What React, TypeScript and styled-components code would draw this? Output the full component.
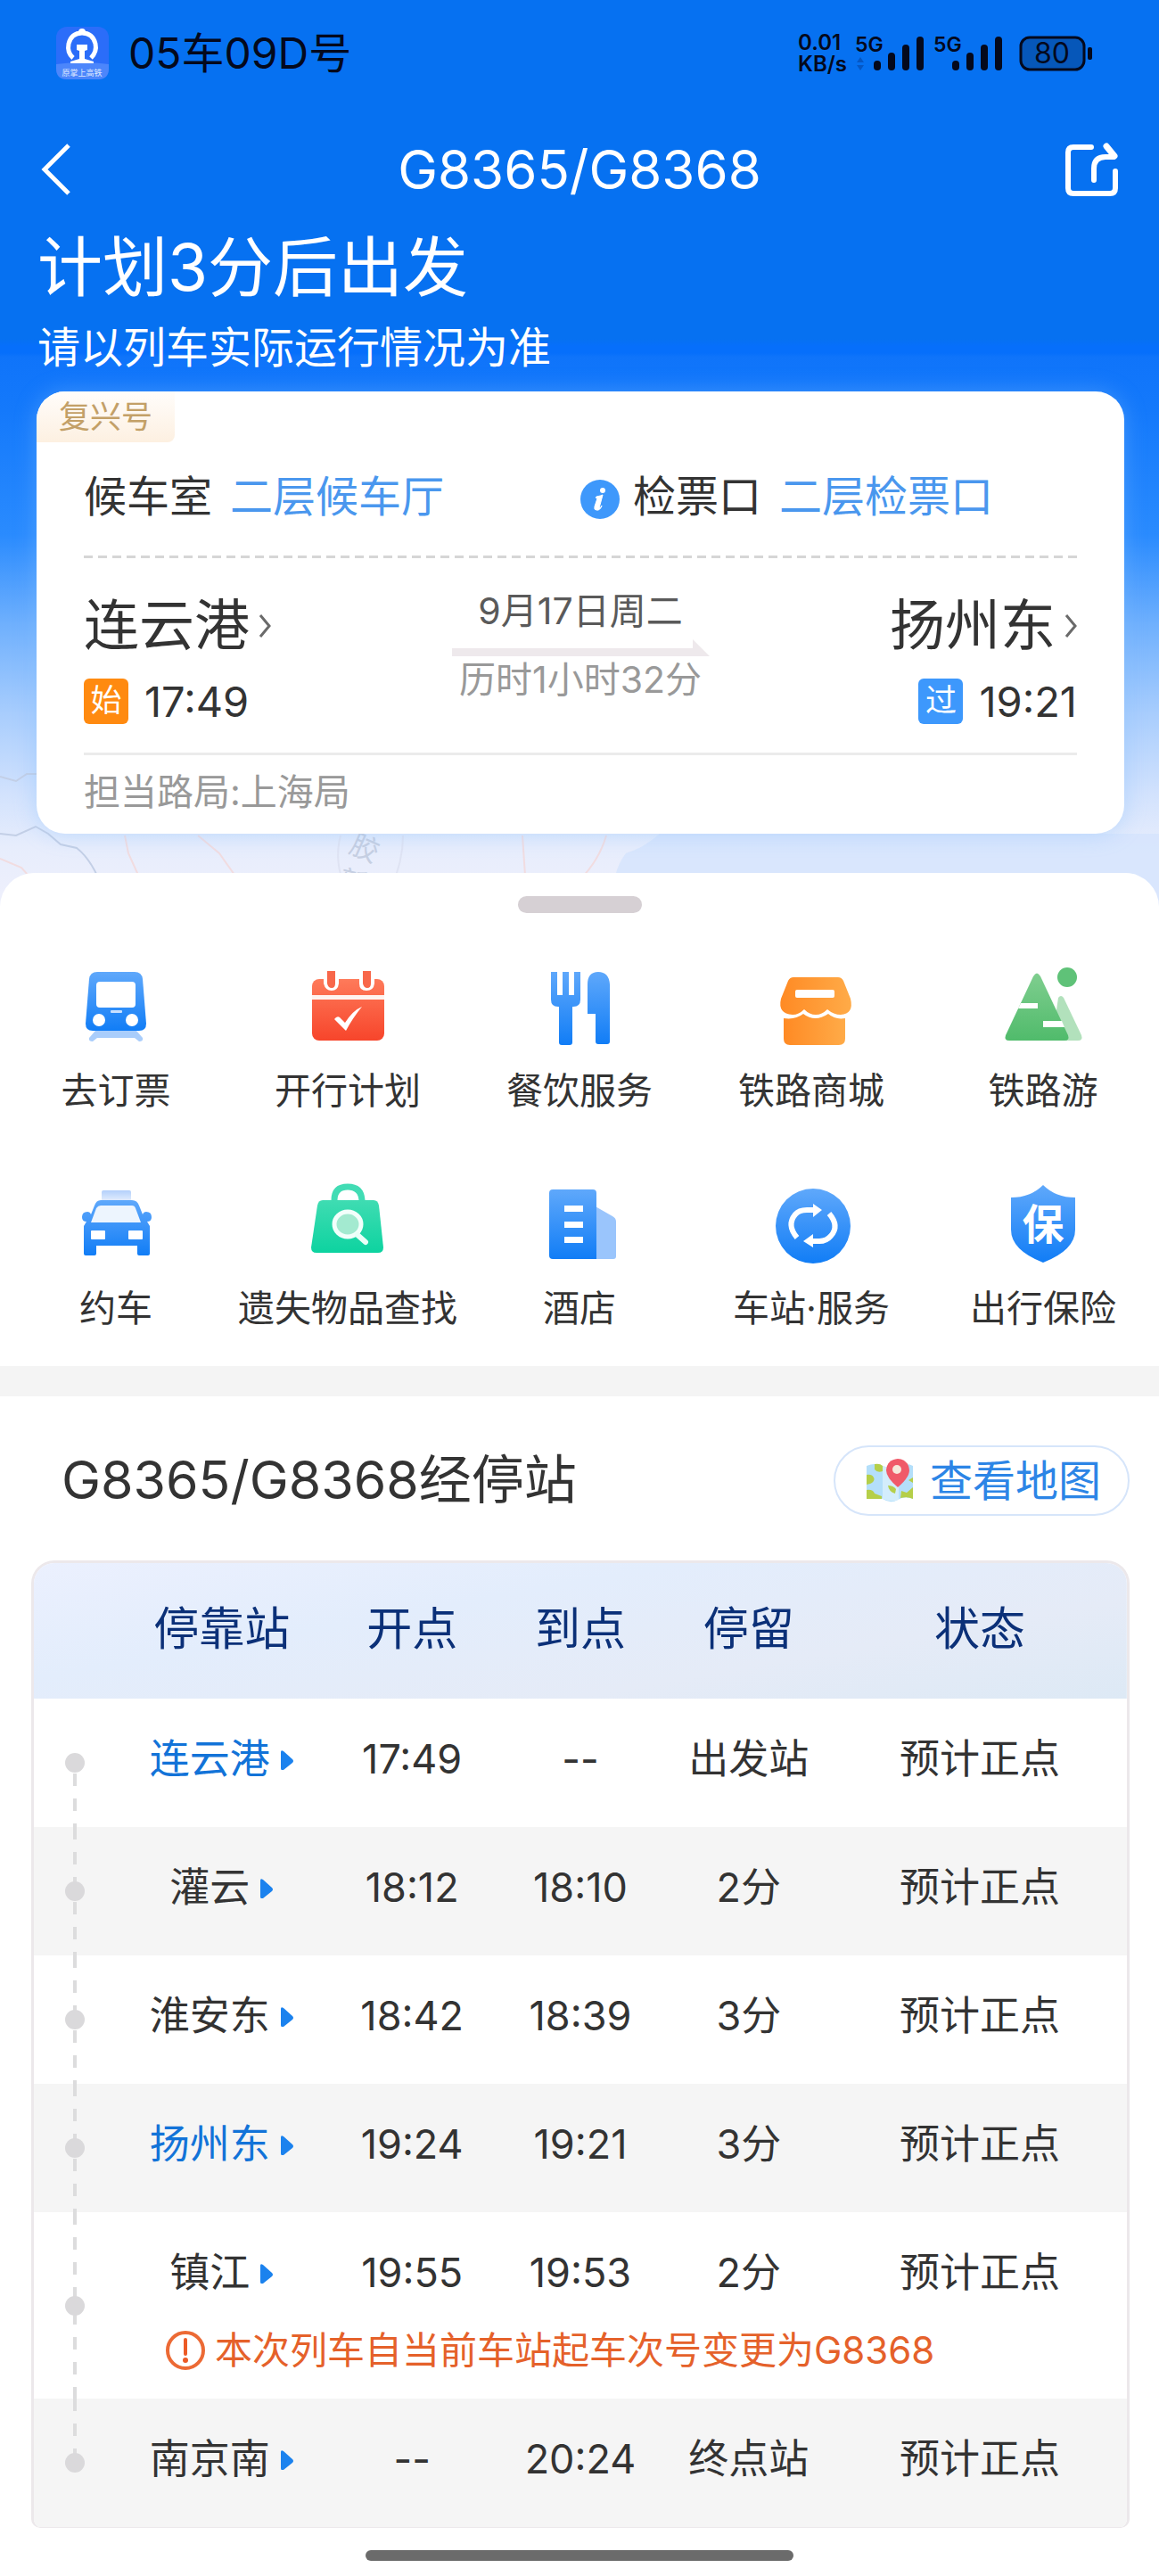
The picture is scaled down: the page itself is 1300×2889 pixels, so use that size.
import React from "react";
import styled, { createGlobalStyle } from "styled-components";

const Global = createGlobalStyle`
  *, *::before, *::after { box-sizing: border-box; }
  body {
    margin: 0;
    background: #fff;
    color: #333;
    font-family: Inter, "Noto Sans CJK SC", sans-serif;
    font-size: 41px;
    line-height: 1.2;
  }
  button, a { font: inherit; color: inherit; }
  button { border: 0; padding: 0; background: none; cursor: pointer; }
  a { text-decoration: none; }
  h1, h2, p { margin: 0; font-weight: 400; }
  svg { display: block; flex: none; }
`;

/* ---------- hero ---------- */

const Hero = styled.header`
  position: relative;
  padding-bottom: 84px;
  overflow: hidden;
  color: #fff;
  background: linear-gradient(
    #0671f1 0,
    #0671f1 380px,
    #066ffb 388px,
    #066ffb 396px,
    #0f74fa 400px,
    #1479fb 460px,
    #2a8bfe 600px,
    #6fb0fd 700px,
    #a8cdfd 800px,
    #d2e2fd 890px,
    #e7edfc 950px,
    #edeffc 1000px
  );
`;

const MapLines = styled.svg`
  position: absolute;
  left: 0;
  bottom: 0;
  width: 1300px;
  height: 260px;
`;

const Layer = styled.div`
  position: relative;
`;

const StatusBar = styled.div`
  display: flex;
  align-items: center;
  height: 120px;
  padding: 0 75px 0 62px;
  color: #04091c;
`;

const Seat = styled.span`
  margin-left: 20px;
  font-size: 48px;
`;

const Rate = styled.span`
  margin-left: auto;
  width: 56px;
  font-size: 24px;
  line-height: 24px;
  font-weight: 600;
`;

const Signals = styled.div`
  display: flex;
  gap: 10px;
  margin: 0 18px 0 8px;
`;

const NavBar = styled.nav`
  display: grid;
  grid-template-columns: 1fr auto 1fr;
  align-items: center;
  height: 140px;
  padding: 0 45px;
`;

const NavButton = styled.button<{ $end?: boolean }>`
  justify-self: ${(p) => (p.$end ? "end" : "start")};
`;

const NavTitle = styled.h1`
  font-size: 60px;
`;

const Headline = styled.p`
  padding: 0 42px;
  font-size: 73px;
  line-height: 80px;
`;

const Subline = styled.p`
  padding: 0 42px;
  font-size: 48px;
  line-height: 99px;
`;

/* ---------- trip card ---------- */

const Card = styled.section`
  margin: 0 39px 0 41px;
  overflow: hidden;
  border-radius: 32px;
  background: #fff;
  color: #333;
  box-shadow: 0 0 24px rgba(130, 190, 255, 0.4);
`;

const TrainTag = styled.span`
  display: block;
  width: 155px;
  padding-left: 25px;
  border-bottom-right-radius: 8px;
  background: linear-gradient(#fffdfb, #fdf0e1);
  color: #c3a067;
  font-size: 35px;
  line-height: 57px;
`;

const CardBody = styled.div`
  padding: 0 53px;
`;

const GateRow = styled.div`
  display: grid;
  grid-template-columns: 1fr 1fr;
  padding: 31px 0 36px;
  font-size: 48px;
  line-height: 60px;
`;

const Gate = styled.div`
  display: flex;
  align-items: center;
`;

const GateValue = styled.span`
  margin-left: 20px;
  color: #4a97ee;
`;

const InfoButton = styled.button`
  margin: 6px 15px 0 0;
`;

const Dashes = styled.div`
  height: 3px;
  background: repeating-linear-gradient(90deg, #d6d6d6 0 10px, transparent 10px 16px);
`;

const Trip = styled.div`
  display: grid;
  grid-template-columns: 1fr auto 1fr;
  padding: 35px 0 32px;
  border-bottom: 3px solid #ebebeb;
`;

const Stop = styled.div<{ $end?: boolean }>`
  display: flex;
  flex-direction: column;
  align-items: ${(p) => (p.$end ? "flex-end" : "flex-start")};
  gap: 24px;
  padding-top: 6px;
`;

const StopName = styled.a`
  display: flex;
  align-items: center;
  gap: 10px;
  font-size: 62px;
  line-height: 70px;
`;

const StopTime = styled.div`
  display: flex;
  align-items: center;
  gap: 18px;
  font-size: 47px;
  line-height: 51px;
`;

const Badge = styled.span<{ $color: string }>`
  width: 50px;
  height: 51px;
  border-radius: 6px;
  background: ${(p) => p.$color};
  color: #fff;
  font-size: 35px;
  line-height: 49px;
  text-align: center;
`;

const Middle = styled.div`
  display: flex;
  flex-direction: column;
  align-items: center;
  color: #999;
  line-height: 48px;
`;

const TripDate = styled.span`
  margin-bottom: 8px;
  color: #5a5a5a;
`;

const Bureau = styled.p`
  padding: 17px 0 23px;
  color: #999;
  line-height: 48px;
`;

/* ---------- services sheet ---------- */

const Sheet = styled.section`
  position: relative;
  margin-top: -40px;
  padding: 26px 0 40px;
  border-radius: 38px 38px 0 0;
  background: #fff;
`;

const Handle = styled.div`
  width: 139px;
  height: 19px;
  margin: 0 auto 56px;
  border-radius: 10px;
  background: #d6d0d4;
`;

const Services = styled.div`
  display: grid;
  grid-template-columns: repeat(5, 1fr);
  row-gap: 76px;
`;

const Service = styled.button`
  display: flex;
  flex-direction: column;
  align-items: center;
  gap: 18px;
  line-height: 50px;
  white-space: nowrap;
`;

const Divider = styled.div`
  height: 34px;
  background: #f4f4f4;
`;

/* ---------- stops ---------- */

const StopsSection = styled.section`
  padding: 55px 33px 25px 35px;
`;

const StopsHead = styled.div`
  display: flex;
  align-items: center;
  justify-content: space-between;
  padding-left: 34px;
  margin-bottom: 50px;
`;

const StopsTitle = styled.h2`
  font-size: 59px;
`;

const MapButton = styled.button`
  display: flex;
  align-items: center;
  gap: 18px;
  height: 79px;
  padding: 0 30px 0 34px;
  border: 2px solid #d6e5fa;
  border-radius: 40px;
  color: #2c85e6;
  font-size: 48px;
`;

const TableFrame = styled.div`
  overflow: hidden;
  border: 3px solid #ece8eb;
  border-bottom-width: 1px;
  border-radius: 26px 26px 10px 10px;
`;

const Table = styled.table`
  width: 100%;
  border-collapse: collapse;
  table-layout: fixed;
  font-size: 45px;
  line-height: 54px;
  text-align: center;
  white-space: nowrap;
`;

const Col = styled.col<{ $width?: string }>`
  width: ${(p) => p.$width ?? "auto"};
`;

const HeadRow = styled.tr`
  background: linear-gradient(170deg, #ebf0fe, #e3edfc 35%, #e5ebf7 70%, #dde9f5);
  color: #0b3078;
  font-size: 51px;
`;

const HeadCell = styled.th`
  padding: 47px 0 51px;
  font-weight: 400;
`;

const Row = styled.tr<{ $shaded: boolean }>`
  background: ${(p) => (p.$shaded ? "#f5f5f5" : "#fff")};
`;

const Cell = styled.td<{ $tight?: boolean }>`
  padding: 41px 0 ${(p) => (p.$tight ? 0 : 49)}px;
`;

const covers = {
  first: "linear-gradient(#fff 50%, transparent 50%), ",
  last: "linear-gradient(transparent 50%, #f5f5f5 50%), ",
  middle: "",
};

const TrackCell = styled.td<{ $place: keyof typeof covers }>`
  padding: 0;
  vertical-align: middle;
  background: ${(p) => covers[p.$place]}
    repeating-linear-gradient(#dcdcdd 0 14px, transparent 14px 28px) center / 4px 100% no-repeat;
`;

const Dot = styled.span`
  display: block;
  width: 22px;
  height: 22px;
  margin: 0 auto;
  border-radius: 50%;
  background: #dad9db;
`;

const Station = styled.a<{ $active?: boolean }>`
  display: inline-flex;
  align-items: center;
  gap: 11px;
  color: ${(p) => (p.$active ? "#1273d8" : "inherit")};
`;

const NoticeCell = styled.td`
  padding: 33px 0 27px 55px;
`;

const Notice = styled.div`
  display: flex;
  align-items: center;
  gap: 10px;
  color: #e5612a;
  font-size: 42px;
`;

const HomeBar = styled.div`
  width: 480px;
  height: 12px;
  margin: 0 auto 19px;
  border-radius: 6px;
  background: #6b6b6b;
`;

/* ---------- icons ---------- */

const HiddenSvg = styled.svg`
  position: absolute;
`;

const Grad = ({ id, from, to }: { id: string; from: string; to: string }) => (
  <linearGradient id={id} x1="0" y1="0" x2="0" y2="1">
    <stop offset="0" stopColor={from} />
    <stop offset="1" stopColor={to} />
  </linearGradient>
);

const Defs = () => (
  <HiddenSvg width="0" height="0" aria-hidden="true">
    <defs>
      <Grad id="blue" from="#5fa8fb" to="#117df6" />
      <Grad id="red" from="#fe7a5a" to="#f7452b" />
      <Grad id="green" from="#3fdcb2" to="#0dd3a0" />
      <Grad id="leaf" from="#7fce8f" to="#50bb6b" />
      <Grad id="pale" from="#b3d0fb" to="#e3edfd" />
      <linearGradient id="orange" x1="0" y1="0" x2="1" y2="0">
        <stop offset="0" stopColor="#ff8a24" />
        <stop offset="1" stopColor="#ffab48" />
      </linearGradient>
    </defs>
  </HiddenSvg>
);

const Icon = ({ children }: { children: React.ReactNode }) => (
  <svg width="100" height="100" viewBox="0 0 100 100" aria-hidden="true">
    {children}
  </svg>
);

const TrainIcon = () => (
  <Icon>
    <path d="M27 76h46l7 8q1 4-4 4l-5-4H29l-5 4q-5 0-4-4z" fill="#a9cdfb" />
    <path d="M29 10h42q8 0 9 8l4 50q0 8-8 8H24q-8 0-8-8l4-50q1-8 9-8z" fill="url(#blue)" />
    <rect x="28" y="21" width="44" height="29" rx="4" fill="#fff" />
    <rect x="44" y="53" width="13" height="3" rx="1" fill="#c8e0ff" />
    <ellipse cx="31" cy="64" rx="7" ry="7" fill="#fff" />
    <ellipse cx="68" cy="64" rx="7" ry="7" fill="#fff" />
  </Icon>
);

const CalendarIcon = () => (
  <Icon>
    <rect x="10" y="18" width="81" height="69" rx="8" fill="url(#red)" />
    <path d="M10 36h81v5H10z" fill="#fff3ef" />
    <path d="M23 8h17v15q-1 8-8 8t-9-8zM63 8h17v15q-1 8-9 8t-8-8z" fill="#fff" />
    <path d="M27 9h9v14q0 5-4 5t-5-5zM67 9h9v14q0 5-4 5t-5-5z" fill="#f8674a" />
    <path d="M35 63q3-4 6-2l6 6q9-14 19-18-10 12-18 27z" fill="#fff" />
  </Icon>
);

const FoodIcon = () => (
  <Icon>
    <path
      d="M18 10h7v26h6V10h7v26h6V10h7v31q0 8-8 8h-1v40q0 3-3 3h-9q-3 0-3-3V49h-1q-8 0-8-8z"
      fill="url(#blue)"
    />
    <path d="M59 24q0-14 12-14t13 14v64q0 3-3 3H71q-3 0-3-3V57h-9z" fill="url(#blue)" />
  </Icon>
);

const ShopIcon = () => (
  <Icon>
    <path
      d="M30 16h50q4 0 6 4l8 20q4 17-11 18-8 0-15-6-6 6-13 6t-13-6q-6 6-13 6-17-1-13-18l8-20q2-4 6-4z"
      fill="url(#orange)"
    />
    <rect x="32" y="30" width="44" height="9" rx="2" fill="#fff" />
    <path
      d="M19 62q13 2 22-5 13 10 28 0 8 7 19 5v23q0 7-7 7H26q-7 0-7-7z"
      fill="url(#orange)"
    />
  </Icon>
);

const MountainIcon = () => (
  <Icon>
    <path d="M67 39q3-4 6 0l20 42q2 6-4 6H60z" fill="#b2e1bc" />
    <path d="M39 15q4-7 8 0l31 66q2 6-4 6H12q-6 0-4-6z" fill="url(#leaf)" />
    <circle cx="77" cy="16" r="11" fill="#5fc278" />
    <path d="M25 45h19v6H22zM50 65h21l3 7H50z" fill="#fff" />
  </Icon>
);

const TaxiIcon = () => (
  <Icon>
    <rect x="34" y="11" width="33" height="12" rx="2" fill="url(#pale)" />
    <path
      d="M33 22h35q6 0 8 6l4 10q1-3 4-3 6 0 6 6 0 5-5 5l3 5v31q0 2-2 2H76q-2 0-2-2V73H28v9q0 2-2 2H16q-2 0-2-2V51l3-5q-5 0-5-5 0-6 6-6 3 0 4 3l4-10q2-6 7-6z"
      fill="url(#blue)"
    />
    <path d="M33 28h35q3 0 4 3l6 16H22l6-16q2-3 5-3z" fill="#edf5fe" />
    <rect x="22" y="56" width="16" height="10" rx="1" fill="#fff" />
    <rect x="64" y="56" width="16" height="10" rx="1" fill="#fff" />
  </Icon>
);

const BagIcon = () => (
  <Icon>
    <path d="M35 26v-4q0-15 15-15t16 15v4" fill="none" stroke="#41dcb4" strokeWidth="7" />
    <path d="M22 22h57q5 0 6 6l5 47q0 6-6 6H15q-6 0-6-6l7-47q1-6 6-6z" fill="url(#green)" />
    <ellipse cx="50" cy="49" rx="15" ry="14" fill="#a3ead0" stroke="#f2fffb" strokeWidth="5" />
    <path d="M61 61l9 8" stroke="#eafff8" strokeWidth="6" strokeLinecap="round" />
  </Icon>
);

const HotelIcon = () => (
  <Icon>
    <path d="M66 28l21 12q4 2 4 6v39q0 3-3 3H66z" fill="#9ac5fc" />
    <path d="M20 10h45q4 0 4 4v74H20q-4 0-4-4V14q0-4 4-4z" fill="url(#blue)" />
    <path d="M33 28h21v7H33zM33 46h21v7H33zM33 63h21v7H33z" fill="#fff" />
  </Icon>
);

const StationIcon = () => (
  <Icon>
    <circle cx="52" cy="51" r="42" fill="url(#blue)" />
    <g fill="none" stroke="#fff" strokeWidth="6">
      <path d="M34 64q-12-14-2-26 4-5 13-5h9" />
      <path d="M70 37q12 14 2 25-5 6-13 6h-8" />
    </g>
    <path d="M52 26l10 7-10 8zM52 60v15l-11-7z" fill="#fff" />
  </Icon>
);

const ShieldIcon = () => (
  <Icon>
    <path d="M50 5q14 14 36 14v36q0 23-36 37-36-14-36-37V19q22 0 36-14z" fill="url(#blue)" />
    <text
      x="50"
      y="66"
      textAnchor="middle"
      fill="#fff"
      fontSize="47"
      fontWeight="700"
      fontFamily='"Noto Sans CJK SC", sans-serif'
    >
      保
    </text>
  </Icon>
);

const AppLogo = () => (
  <svg width="62" height="62" viewBox="0 0 62 62" aria-hidden="true">
    <rect x="1" y="1" width="59" height="59" rx="12" fill="#2b6df9" />
    <path d="M1 43q30-4 59 0v5q0 12-12 12H13Q1 60 1 48z" fill="#4c86fb" />
    <path d="M20 36q-7-6-5-16 3-12 15-12t15 12q2 9-5 16" fill="none" stroke="#fff" strokeWidth="5" />
    <path d="M26 7q0-4 4-4t4 4zM24 21h12v6l-3 1v9l10 3v2H17v-2l10-3v-9l-3-1z" fill="#fff" />
    <text
      x="30"
      y="56"
      textAnchor="middle"
      fill="#dfe9ff"
      fontSize="9"
      fontFamily='"Noto Sans CJK SC", sans-serif'
    >
      原掌上高铁
    </text>
  </svg>
);

const Signal = ({ activity }: { activity?: boolean }) => (
  <svg width="78" height="56" viewBox="0 -8 78 56" aria-label="5G">
    <text x="0" y="18" fontSize="23" fontWeight="600" fill="#04091c" fontFamily="Inter, sans-serif">
      5G
    </text>
    {activity && <path d="M2 30l4-6 4 6zM2 33h8l-4 6z" fill="#0557c4" />}
    <g fill="#04091c">
      <rect x="21" y="28" width="8" height="11" rx="4" />
      <rect x="37" y="19" width="8" height="20" rx="4" />
      <rect x="53" y="10" width="8" height="29" rx="4" />
      <rect x="69" y="1" width="8" height="38" rx="4" />
    </g>
  </svg>
);

const Battery = () => (
  <svg width="82" height="40" viewBox="0 0 82 40" aria-label="80%">
    <rect x="2" y="2" width="71" height="36" rx="10" fill="#0657b9" stroke="#04091c" strokeWidth="3" />
    <rect x="77" y="13" width="5" height="14" rx="2" fill="#04091c" />
    <text
      x="37"
      y="31"
      textAnchor="middle"
      fontSize="32"
      fill="#04091c"
      fontFamily="Inter, sans-serif"
    >
      80
    </text>
  </svg>
);

const BackIcon = () => (
  <svg width="36" height="58" viewBox="0 0 36 58" aria-hidden="true">
    <path d="M32 2L5 29l27 27" fill="none" stroke="#fff" strokeWidth="5" />
  </svg>
);

const ShareIcon = () => (
  <svg width="62" height="62" viewBox="0 0 62 62" aria-hidden="true">
    <g fill="none" stroke="#fff" strokeWidth="6" strokeLinecap="round" strokeLinejoin="round">
      <path d="M31 6H11Q5 6 5 12v40q0 6 6 6h41q6 0 6-6V33" />
      <path d="M34 43V30q0-13 13-13h9" />
      <path d="M48 5l9 11" strokeWidth="7" />
    </g>
  </svg>
);

const InfoIcon = () => (
  <svg width="44" height="44" viewBox="0 0 44 44" aria-hidden="true">
    <circle cx="22" cy="22" r="22" fill="#3e98fb" />
    <circle cx="25" cy="12" r="3" fill="#fff" />
    <path d="M18 19q5-1 7-2l-4 15q2 0 3-3-2 6-6 5-3 0-2-4l3-9-2-1z" fill="#fff" stroke="#fff" />
  </svg>
);

const ChevronIcon = () => (
  <svg width="14" height="26" viewBox="0 0 14 26" aria-hidden="true">
    <path d="M2 1l10 12L2 25" fill="none" stroke="#6a6a6a" strokeWidth="3" />
  </svg>
);

const ArrowIcon = () => (
  <svg width="289" height="21" viewBox="0 0 289 21" aria-hidden="true">
    <path d="M0 10h270V0l19 19H0z" fill="#eee9ec" />
  </svg>
);

const PlayIcon = () => (
  <svg width="16" height="24" viewBox="0 0 16 24" aria-hidden="true">
    <path d="M1 4q0-3 3-1l10 9q2 2 0 4L4 24q-3 1-3-2z" fill="#1b82ee" />
  </svg>
);

const WarnIcon = () => (
  <svg width="46" height="46" viewBox="0 0 46 46" aria-hidden="true">
    <circle cx="23" cy="23" r="20" fill="none" stroke="#ec6a35" strokeWidth="4" />
    <path d="M23 11v16" stroke="#ec5a25" strokeWidth="4" strokeLinecap="round" />
    <circle cx="23" cy="34" r="3" fill="#ec5a25" />
  </svg>
);

const MapIcon = () => (
  <svg width="54" height="52" viewBox="0 0 54 52" aria-hidden="true">
    <path d="M1 9q9-4 18 0t18 0 16 0v37q-9-4-17 1t-17-1-18 0z" fill="#b4dffa" />
    <path d="M19 9q9 4 18 0v38q-8 3-18-1z" fill="#d3edfc" />
    <path
      d="M10 7q6-1 9 2v6q-6 2-9-2zM1 19q6-1 8 3t-4 7l-4 1zM1 36q7-1 9 4l8 3v3H1zM25 31q6 0 9 4l-1 5q-7-2-8-9zM40 37l6 2 7-6v13q-6-3-14-1zM48 25l5-3v6z"
      fill="#b5cf49"
    />
    <path d="M36 1q12 1 13 13 0 8-13 19Q23 22 23 14 24 2 36 1z" fill="#f05a69" />
    <circle cx="35" cy="13" r="5" fill="#f6e9dc" />
  </svg>
);

/* ---------- data ---------- */

const services = [
  { label: "去订票", Pic: TrainIcon },
  { label: "开行计划", Pic: CalendarIcon },
  { label: "餐饮服务", Pic: FoodIcon },
  { label: "铁路商城", Pic: ShopIcon },
  { label: "铁路游", Pic: MountainIcon },
  { label: "约车", Pic: TaxiIcon },
  { label: "遗失物品查找", Pic: BagIcon },
  { label: "酒店", Pic: HotelIcon },
  { label: "车站·服务", Pic: StationIcon },
  { label: "出行保险", Pic: ShieldIcon },
];

type StopInfo = {
  name: string;
  depart: string;
  arrive: string;
  stay: string;
  active?: boolean;
  notice?: string;
};

const stops: StopInfo[] = [
  { name: "连云港", depart: "17:49", arrive: "--", stay: "出发站", active: true },
  { name: "灌云", depart: "18:12", arrive: "18:10", stay: "2分" },
  { name: "淮安东", depart: "18:42", arrive: "18:39", stay: "3分" },
  { name: "扬州东", depart: "19:24", arrive: "19:21", stay: "3分", active: true },
  {
    name: "镇江",
    depart: "19:55",
    arrive: "19:53",
    stay: "2分",
    notice: "本次列车自当前车站起车次号变更为G8368",
  },
  { name: "南京南", depart: "--", arrive: "20:24", stay: "终点站" },
];

const StopRows = ({ stop, index }: { stop: StopInfo; index: number }) => {
  const place = index === 0 ? "first" : index === stops.length - 1 ? "last" : "middle";
  const shaded = index % 2 === 1;
  const tight = Boolean(stop.notice);
  return (
    <>
      <Row $shaded={shaded}>
        <TrackCell $place={place} rowSpan={tight ? 2 : 1}>
          <Dot />
        </TrackCell>
        <Cell $tight={tight}>
          <Station href="#" $active={stop.active}>
            {stop.name}
            <PlayIcon />
          </Station>
        </Cell>
        <Cell $tight={tight}>{stop.depart}</Cell>
        <Cell $tight={tight}>{stop.arrive}</Cell>
        <Cell $tight={tight}>{stop.stay}</Cell>
        <Cell $tight={tight}>预计正点</Cell>
      </Row>
      {stop.notice && (
        <Row $shaded={shaded}>
          <NoticeCell colSpan={5}>
            <Notice>
              <WarnIcon />
              {stop.notice}
            </Notice>
          </NoticeCell>
        </Row>
      )}
    </>
  );
};

export default function App() {
  return (
    <div lang="zh-CN">
      <Global />
      <Defs />
      <Hero>
        <MapLines viewBox="0 0 1300 260" aria-hidden="true">
          <path
            d="M740 176q-18 16-38 22-16 20-16 62h614V176z"
            fill="#d5e4fd"
            opacity="0.8"
          />
          <g fill="none" strokeWidth="2">
            <path d="M0 112l18 5 12-8h12M0 176l18 2 22-10 14 8 14 12 18 4q18 14 30 48" stroke="#c3cfe6" />
            <path d="M0 204l24 10 16 18M140 178l4 20 10 22v24M222 178l24 20 24 34M680 178q-8 28-30 50M586 178l4 60" stroke="#f1dce0" />
            <path d="M382 178q-8 30 6 60M452 178q0 30-14 60" stroke="#dfe3f3" />
          </g>
          <g fill="#c6cfe2" fontSize="32" fontFamily='"Noto Sans CJK SC", sans-serif'>
            <text x="390" y="196" transform="rotate(24 390 196)">
              胶
            </text>
            <text x="378" y="238" transform="rotate(14 378 238)">
              新
            </text>
          </g>
        </MapLines>
        <Layer>
          <StatusBar>
            <AppLogo />
            <Seat>05车09D号</Seat>
            <Rate>
              0.01
              <br />
              KB/s
            </Rate>
            <Signals>
              <Signal activity />
              <Signal />
            </Signals>
            <Battery />
          </StatusBar>
          <NavBar>
            <NavButton aria-label="返回">
              <BackIcon />
            </NavButton>
            <NavTitle>G8365/G8368</NavTitle>
            <NavButton $end aria-label="分享">
              <ShareIcon />
            </NavButton>
          </NavBar>
          <Headline>计划3分后出发</Headline>
          <Subline>请以列车实际运行情况为准</Subline>
          <Card>
            <TrainTag>复兴号</TrainTag>
            <CardBody>
              <GateRow>
                <Gate>
                  候车室<GateValue>二层候车厅</GateValue>
                </Gate>
                <Gate>
                  <InfoButton aria-label="检票口说明">
                    <InfoIcon />
                  </InfoButton>
                  检票口<GateValue>二层检票口</GateValue>
                </Gate>
              </GateRow>
              <Dashes />
              <Trip>
                <Stop>
                  <StopName href="#">
                    连云港
                    <ChevronIcon />
                  </StopName>
                  <StopTime>
                    <Badge $color="#ff8a10">始</Badge>
                    17:49
                  </StopTime>
                </Stop>
                <Middle>
                  <TripDate>9月17日周二</TripDate>
                  <ArrowIcon />
                  <span>历时1小时32分</span>
                </Middle>
                <Stop $end>
                  <StopName href="#">
                    扬州东
                    <ChevronIcon />
                  </StopName>
                  <StopTime>
                    <Badge $color="#3d98fc">过</Badge>
                    19:21
                  </StopTime>
                </Stop>
              </Trip>
              <Bureau>担当路局:上海局</Bureau>
            </CardBody>
          </Card>
        </Layer>
      </Hero>
      <Sheet>
        <Handle />
        <Services>
          {services.map(({ label, Pic }) => (
            <Service key={label}>
              <Pic />
              {label}
            </Service>
          ))}
        </Services>
      </Sheet>
      <Divider />
      <StopsSection>
        <StopsHead>
          <StopsTitle>G8365/G8368经停站</StopsTitle>
          <MapButton>
            <MapIcon />
            查看地图
          </MapButton>
        </StopsHead>
        <TableFrame>
          <Table>
            <colgroup>
              <Col $width="7.5%" />
              <Col $width="19.4%" />
              <Col $width="15.4%" />
              <Col $width="15.4%" />
              <Col $width="15.4%" />
              <Col />
            </colgroup>
            <thead>
              <HeadRow>
                <HeadCell aria-label="进度" />
                <HeadCell>停靠站</HeadCell>
                <HeadCell>开点</HeadCell>
                <HeadCell>到点</HeadCell>
                <HeadCell>停留</HeadCell>
                <HeadCell>状态</HeadCell>
              </HeadRow>
            </thead>
            <tbody>
              {stops.map((stop, index) => (
                <StopRows key={stop.name} stop={stop} index={index} />
              ))}
            </tbody>
          </Table>
        </TableFrame>
      </StopsSection>
      <HomeBar />
    </div>
  );
}
